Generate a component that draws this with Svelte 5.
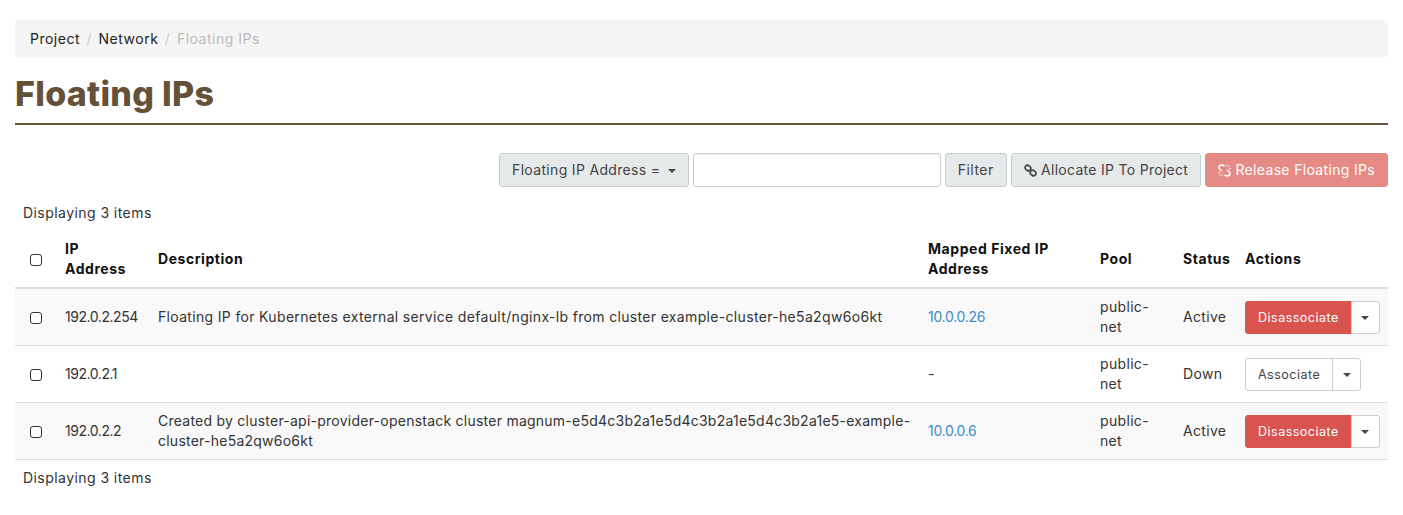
<script>
  const rows = [
    { ip: '192.0.2.254', description: 'Floating IP for Kubernetes external service default/nginx-lb from cluster example-cluster-he5a2qw6o6kt', fixed: '10.0.0.26', status: 'Active', action: 'Disassociate' },
    { ip: '192.0.2.1', description: '', fixed: '-', status: 'Down', action: 'Associate' },
    { ip: '192.0.2.2', description: 'Created by cluster-api-provider-openstack cluster magnum-e5d4c3b2a1e5d4c3b2a1e5d4c3b2a1e5-example-cluster-he5a2qw6o6kt', fixed: '10.0.0.6', status: 'Active', action: 'Disassociate', long: true }
  ];
</script>

<div class="page">
  <ol class="breadcrumb">
    <li><span class="crumb">Project</span><span class="sep">/</span></li>
    <li><span class="crumb">Network</span><span class="sep">/</span></li>
    <li class="current">Floating IPs</li>
  </ol>

  <h1 class="title">Floating IPs</h1>

  <div class="actions">
    <button class="btn">Floating IP Address = <span class="caret"></span></button>
    <input class="filter-input" type="text" />
    <button class="btn filter">Filter</button>
    <button class="btn allocate">
      <svg class="icon" viewBox="0 0 14 14" aria-hidden="true">
        <g fill="none" stroke="currentColor" stroke-width="1.8">
          <rect x="1" y="1.8" width="6.4" height="5" rx="2.4" transform="rotate(40 4.2 4.3)" />
          <rect x="6.6" y="7.2" width="6.4" height="5" rx="2.4" transform="rotate(40 9.8 9.7)" />
        </g>
      </svg>
      Allocate IP To Project
    </button>
    <button class="btn danger">
      <svg class="icon" viewBox="0 0 14 14" aria-hidden="true">
        <g fill="none" stroke="currentColor">
          <path d="M7 2.2 L5.4 1.2 Q3 0.6 1.6 2 Q0.4 3.6 1.8 5.4 L4.2 7.6" stroke-width="1.7" />
          <path d="M7 11.8 L8.6 12.8 Q11 13.4 12.4 12 Q13.6 10.4 12.2 8.6 L9.8 6.4" stroke-width="1.7" />
          <path d="M9.6 0.6v2M11.4 3l1.6-1.2M11.8 5h2M4.4 13.4v-2M2.6 11l-1.6 1.2M2.2 9h-2" stroke-width="1" />
        </g>
      </svg>
      Release Floating IPs
    </button>
  </div>

  <table class="table">
    <caption>Displaying 3 items</caption>
    <thead>
      <tr>
        <th class="check"><span class="box"></span></th>
        <th class="c-ip">IP Address</th>
        <th>Description</th>
        <th class="c-fixed">Mapped Fixed IP Address</th>
        <th class="c-pool">Pool</th>
        <th class="c-status">Status</th>
        <th class="c-actions">Actions</th>
      </tr>
    </thead>
    <tbody>
      {#each rows as row}
        <tr>
          <td class="check"><span class="box"></span></td>
          <td class="num">{row.ip}</td>
          <td class:long={row.long}>{row.description}</td>
          <td>
            {#if row.fixed === '-'}-{:else}<span class="link">{row.fixed}</span>{/if}
          </td>
          <td>public-net</td>
          <td>{row.status}</td>
          <td>
            <div class="split" class:red={row.action === 'Disassociate'}>
              <button class="main">{row.action}</button>
              <button class="toggle"><span class="caret"></span></button>
            </div>
          </td>
        </tr>
      {/each}
    </tbody>
  </table>
  <div class="footer">Displaying 3 items</div>
</div>

<style>
  :global(body) {
    background: #fff;
    color: #333;
    font-family: "Inter", "Liberation Sans", sans-serif;
    font-size: 14px;
    line-height: 20px;
    letter-spacing: 0.33px;
  }

  .page {
    padding: 20px 15px 0;
  }

  .breadcrumb {
    display: flex;
    list-style: none;
    margin: 0;
    padding: 8px 15px;
    height: 37px;
    box-sizing: border-box;
    align-items: center;
    background: #f5f5f5;
    border-radius: 2px;
    letter-spacing: 0.5px;
  }

  .crumb {
    color: #222;
  }

  .sep {
    color: #ccc;
    padding: 0 6.5px;
  }

  .current {
    color: #bbb;
  }

  .title {
    margin: 17px 0 0;
    padding-bottom: 9px;
    border-bottom: 2px solid #6b5339;
    color: #655038;
    font-size: 34px;
    line-height: 40px;
    font-weight: 800;
    letter-spacing: 0.3px;
  }

  .actions {
    display: flex;
    justify-content: flex-end;
    gap: 4px;
    margin-top: 28px;
  }

  .btn {
    height: 34px;
    padding: 0 12px;
    border: 1px solid #c8cdcd;
    border-radius: 3px;
    background: #e6e9ea;
    color: #444;
    font: inherit;
    letter-spacing: 0.33px;
    white-space: nowrap;
  }

  .btn .caret {
    margin-left: 3px;
  }

  .btn.filter {
    letter-spacing: 0.5px;
  }

  .btn.allocate {
    letter-spacing: 0.29px;
  }

  .btn.danger {
    background: #e68a85;
    border-color: #e68a85;
    color: #fff;
  }

  .icon {
    width: 13px;
    height: 13px;
    vertical-align: -2px;
  }

  .caret {
    display: inline-block;
    width: 0;
    height: 0;
    margin-left: 2px;
    vertical-align: middle;
    border-top: 4px solid;
    border-left: 4px solid transparent;
    border-right: 4px solid transparent;
  }

  .filter-input {
    width: 248px;
    height: 34px;
    box-sizing: border-box;
    border: 1px solid #ccc;
    border-radius: 3px;
    box-shadow: inset 0 1px 1px rgba(0, 0, 0, 0.075);
    background: #fff;
  }

  .table {
    width: 100%;
    border-collapse: collapse;
    table-layout: fixed;
    margin-top: 8px;
  }

  caption {
    text-align: left;
    padding: 8px;
    color: #333;
    letter-spacing: 0.44px;
  }

  th {
    text-align: left;
    padding: 8px;
    color: #111;
    font-weight: 700;
    vertical-align: middle;
    border-bottom: 2px solid #ddd;
    letter-spacing: 0.55px;
  }

  td {
    padding: 8px;
    vertical-align: middle;
    border-bottom: 1px solid #ddd;
    line-height: 20px;
    height: 40px;
  }

  td.long {
    letter-spacing: 0.24px;
  }

  tbody tr:nth-child(odd) {
    background: #f9f9f9;
  }

  .check { width: 27px; padding-left: 15px; padding-right: 0; }
  .c-ip { width: 77px; }
  .c-fixed { width: 156px; }
  .c-pool { width: 67px; }
  .c-status { width: 46px; }
  .c-actions { width: 135px; }

  .box {
    display: block;
    width: 10px;
    height: 10px;
    margin-top: 2px;
    border: 1px solid #333;
    border-radius: 3px;
    background: #fff;
  }

  .num {
    letter-spacing: -0.45px;
  }

  .link {
    color: #428bca;
    letter-spacing: -0.3px;
  }

  .split {
    display: flex;
    height: 33px;
    width: max-content;
  }

  .split button {
    font: inherit;
    font-size: 12.5px;
    line-height: 18px;
    background: #fff;
    color: #444;
    border: 1px solid #ccc;
    letter-spacing: 0.5px;
  }

  .main {
    padding: 1px 12px 0;
    border-radius: 3px 0 0 3px;
  }

  .toggle {
    width: 29px;
    padding: 0;
    margin-left: -1px;
    border-radius: 0 3px 3px 0;
    color: #333;
  }

  .toggle .caret {
    margin-left: 0;
  }

  .split.red .main {
    background: #d9534f;
    border-color: #d9534f;
    color: #fff;
  }

  .footer {
    padding: 8px;
    letter-spacing: 0.44px;
  }
</style>
